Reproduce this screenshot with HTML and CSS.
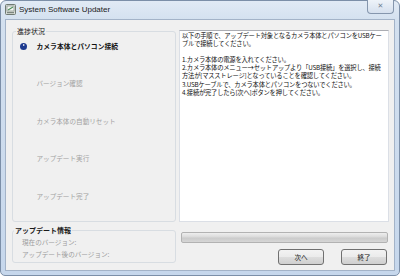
FILE: index.html
```html
<!DOCTYPE html>
<html lang="ja">
<head>
<meta charset="utf-8">
<link rel="stylesheet" href="styles.css">
</head>
<body>
<div class="window">
  <div class="titlebar">
    <svg class="appicon" width="11" height="11" viewBox="0 0 11 11">
      <rect x="0.5" y="0.5" width="10" height="10" rx="1" fill="#d8dcd8" stroke="#6f7a73"/>
      <rect x="2" y="2" width="7" height="5" fill="#f4f6f4" stroke="#8e9a92" stroke-width="0.8"/>
      <path d="M3 6 L8 3" stroke="#4f8f5c" stroke-width="1.2"/>
      <rect x="2" y="8" width="7" height="1.2" fill="#7c867f"/>
    </svg>
    <span class="title">System Software Updater</span>
    <div class="closebtn">✕</div>
  </div>
  <div class="client">
    <div class="leftcol">
      <fieldset class="group progress-group">
        <legend>進捗状況</legend>
        <div class="steps">
          <div class="step current"><span class="bullet"></span><span>カメラ本体とパソコン接続</span></div>
          <div class="step"><span class="bullet off"></span><span>バージョン確認</span></div>
          <div class="step"><span class="bullet off"></span><span>カメラ本体の自動リセット</span></div>
          <div class="step"><span class="bullet off"></span><span>アップデート実行</span></div>
          <div class="step"><span class="bullet off"></span><span>アップデート完了</span></div>
        </div>
      </fieldset>
      <fieldset class="group info-group">
        <legend>アップデート情報</legend>
        <div class="info">
          <div>現在のバージョン:</div>
          <div>アップデート後のバージョン:</div>
        </div>
      </fieldset>
    </div>
    <div class="rightcol">
      <div class="textbox">以下の手順で、アップデート対象となるカメラ本体とパソコンをUSBケー<br>ブルで接続してください。<br><br>1.カメラ本体の電源を入れてください。<br>2.カメラ本体のメニュー→セットアップより「USB接続」を選択し、接続<br>方法が[マスストレージ]となっていることを確認してください。<br>3.USBケーブルで、カメラ本体とパソコンをつないでください。<br>4.接続が完了したら[次へ]ボタンを押してください。</div>
      <div class="progressbar"></div>
      <div class="buttons">
        <button class="btn">次へ</button>
        <button class="btn">終了</button>
      </div>
    </div>
  </div>
</div>
</body>
</html>
```
FILE: styles.css
```css
* { box-sizing: border-box; }
html, body { margin: 0; padding: 0; background: #ffffff; }
body { width: 400px; height: 278px; overflow: hidden; font-family: "Noto Sans CJK JP", "Liberation Sans", sans-serif; }

.window {
  width: 400px;
  height: 276px;
  border: 1px solid #7c8fa8;
  border-radius: 6px 6px 5px 5px;
  background: linear-gradient(to bottom, #e1eaf5 0px, #d3e0ef 20px, #c6d7ec 100%);
  display: flex;
  flex-direction: column;
}

.titlebar {
  height: 18px;
  display: flex;
  align-items: center;
  padding-left: 4px;
  position: relative;
}
.appicon { display: block; margin-right: 3px; margin-top: -1px; }
.title {
  font-family: "Liberation Sans", Arial, sans-serif;
  font-size: 8px;
  color: #1b1b1b;
  margin-top: -1px;
}
.closebtn {
  position: absolute;
  top: -1px;
  right: 5px;
  width: 27px;
  height: 14px;
  border: 1px solid #8596ad;
  border-top: none;
  border-radius: 0 0 4px 4px;
  background: linear-gradient(to bottom, #eef3f9, #d5e0ee);
  color: #6f7f93;
  font-family: "DejaVu Sans", sans-serif;
  font-size: 7px;
  line-height: 13px;
  text-align: center;
}

.client {
  flex: 1;
  margin: 0 4px 4px 4px;
  border: 1px solid #a3b3c8;
  background: #f0f0f0;
  display: flex;
  padding: 0 5px 0 6px;
  gap: 3px;
}

.leftcol {
  width: 164px;
  padding-top: 6px;
  display: flex;
  flex-direction: column;
  gap: 3px;
}

.group {
  margin: 0;
  padding: 0;
  border: 1px solid #d8dde2;
  border-radius: 3px;
  min-width: 0;
}
.group legend {
  font-size: 7px;
  line-height: 10px;
  padding: 0 1px;
  margin-left: 3px;
  color: #1a1a1a;
}
.progress-group { height: 196px; }
.info-group { height: 38px; }
.info-group legend { margin-left: 1px; font-weight: bold; }

.steps {
  padding: 5px 0 0 7px;
  display: flex;
  flex-direction: column;
  gap: 27.4px;
}
.step {
  display: flex;
  align-items: center;
  gap: 9.5px;
  font-size: 6.6px;
  line-height: 10px;
  color: #a2a2a2;
  white-space: nowrap;
}
.step.current { color: #111111; font-weight: bold; font-size: 6.8px; }
.bullet {
  width: 7px;
  height: 7px;
  border-radius: 50%;
  background: #1d3a8f;
  position: relative;
  flex: none;
}
.bullet::after {
  content: "";
  position: absolute;
  left: 2.6px;
  top: 1.7px;
  border-left: 2.6px solid #ffffff;
  border-top: 1.8px solid transparent;
  border-bottom: 1.8px solid transparent;
}
.bullet.off { visibility: hidden; }

.info {
  padding: 1px 0 0 9px;
  font-size: 6.6px;
  line-height: 12px;
  color: #9c9c9c;
}

.rightcol {
  width: 210px;
  margin-top: 10px;
  display: flex;
  flex-direction: column;
}
.textbox {
  height: 192px;
  background: #ffffff;
  border: 1px solid #dbdfe6;
  border-top-color: #abadb3;
  padding: 1px 0 0 2px;
  font-size: 6.3px;
  letter-spacing: -0.22px;
  line-height: 8.1px;
  color: #111111;
  white-space: nowrap;
  overflow: hidden;
}
.progressbar {
  margin: 10px 1px 0 2px;
  height: 11px;
  border: 1px solid #b2b2b2;
  border-radius: 2px;
  background: linear-gradient(to bottom, #eeeeee 0%, #dadada 45%, #cbcbcb 55%, #d6d6d6 100%);
}
.buttons {
  margin-top: 6px;
  display: flex;
  justify-content: flex-end;
  gap: 17px;
  padding-right: 2px;
}
.btn {
  width: 46px;
  height: 16px;
  margin: 0;
  padding: 0;
  border: 1px solid #707070;
  border-radius: 3px;
  background: linear-gradient(to bottom, #f3f3f3 0%, #ebebeb 48%, #dddddd 52%, #cfcfcf 100%);
  font-family: "Noto Sans CJK JP", sans-serif;
  font-size: 6.6px;
  line-height: 14px;
  color: #111111;
}
```
